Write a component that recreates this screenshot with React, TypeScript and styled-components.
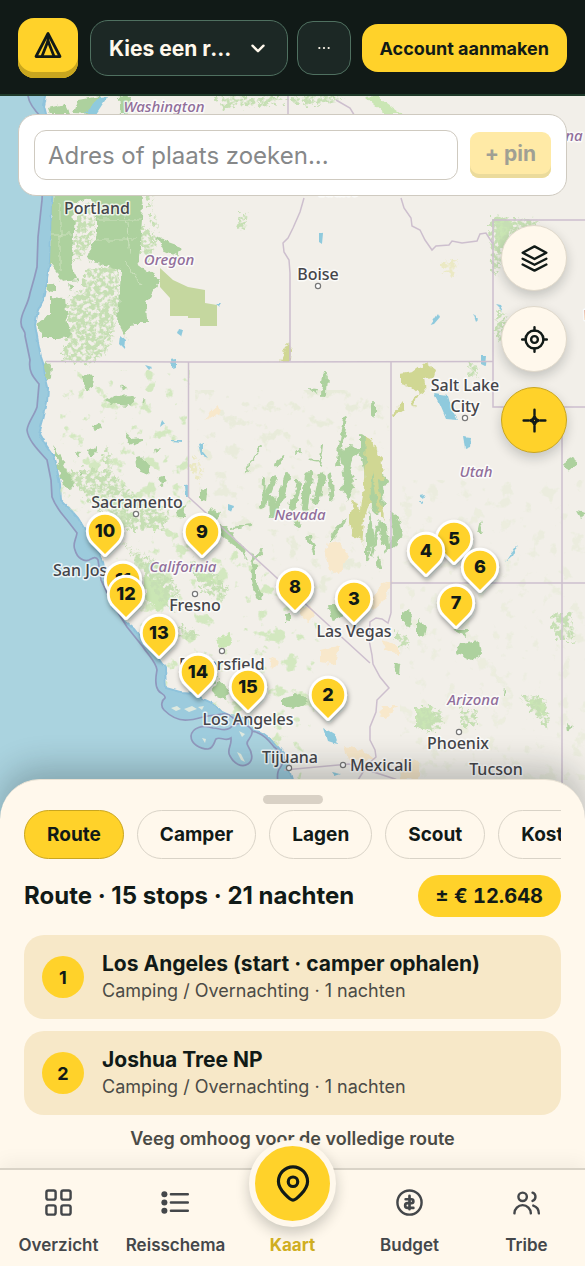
import React from 'react';
import styled, { createGlobalStyle, css } from 'styled-components';

const c = {
  ink: '#111a17',
  panel: '#1c2825',
  line: '#4f7060',
  yellow: '#ffd22a',
  gold: '#c9a61f',
  cream: '#fff8ec',
  sand: '#f7e8c8',
  border: '#d9d3c7',
  muted: '#4b4b46',
};

const GlobalStyle = createGlobalStyle`
  *, *::before, *::after { box-sizing: border-box; }
  body { margin: 0; background: ${c.cream}; color: ${c.ink}; font-family: Inter, "Liberation Sans", sans-serif; }
  button, input, select { font: inherit; color: inherit; margin: 0; }
  button { padding: 0; border: 0; background: none; cursor: pointer; }
`;

const Page = styled.div`
  display: flex;
  flex-direction: column;
  min-height: 100vh;
`;

/* ---------- header ---------- */

const Header = styled.header`
  display: flex;
  align-items: center;
  height: 96px;
  padding: 0 18px;
  background: ${c.ink};
  box-shadow: inset 0 -2px 0 #1f3a2a;
`;

const Logo = styled.a`
  display: grid;
  place-items: center;
  flex: none;
  width: 60px;
  height: 60px;
  margin-right: 12px;
  padding-bottom: 6px;
  border-radius: 16px;
  background: ${c.yellow};
  box-shadow: inset 0 -6px 0 ${c.gold};
  color: ${c.ink};
`;

const TripPicker = styled.label`
  position: relative;
  flex: 1;
  min-width: 0;
  margin-right: 9px;
  color: ${c.cream};
  > svg {
    position: absolute;
    right: 19px;
    top: 17px;
    pointer-events: none;
  }
`;

const TripSelect = styled.select`
  display: block;
  width: 100%;
  height: 56px;
  padding: 0 52px 0 18px;
  appearance: none;
  border: 1px solid ${c.line};
  border-radius: 18px;
  background: ${c.panel};
  font-size: 21px;
  font-weight: 700;
  text-overflow: ellipsis;
  white-space: nowrap;
  overflow: hidden;
`;

const MoreButton = styled.button`
  flex: none;
  width: 54px;
  height: 54px;
  margin-right: 11px;
  border: 1px solid ${c.line};
  border-radius: 16px;
  background: ${c.panel};
  color: ${c.cream};
  display: grid;
  place-items: center;
`;

const AccountButton = styled.button`
  flex: none;
  height: 48px;
  padding: 0 18px;
  border-radius: 16px;
  background: ${c.yellow};
  font-size: 18px;
  font-weight: 700;
`;

/* ---------- map ---------- */

const MapArea = styled.main`
  position: relative;
  flex: 1;
  min-height: 480px;
  overflow: hidden;
  background: #aad3df;
`;

const MapSvg = styled.svg`
  position: absolute;
  inset: 0;
  width: 100%;
  height: 100%;
  display: block;
`;

const SearchBar = styled.form`
  position: absolute;
  top: 18px;
  left: 18px;
  right: 18px;
  display: flex;
  align-items: center;
  gap: 12px;
  height: 82px;
  padding: 0 15px;
  border: 1px solid #cfcac0;
  border-radius: 18px;
  background: #fff;
`;

const SearchInput = styled.input`
  flex: 1;
  min-width: 0;
  height: 50px;
  padding: 0 13px;
  border: 1px solid #cfcac0;
  border-radius: 12px;
  background: #fff;
  font-size: 24px;
  &::placeholder { color: #868889; opacity: 1; }
`;

const PinButton = styled.button`
  flex: none;
  height: 46px;
  padding: 0 15px 4px;
  border-radius: 9px;
  background: #ffeaa6;
  box-shadow: inset 0 -4px 0 #ebdb9c;
  color: #a0a094;
  font-size: 21px;
  font-weight: 700;
`;

const MapTools = styled.div`
  position: absolute;
  top: 129px;
  right: 18px;
  display: flex;
  flex-direction: column;
  gap: 15px;
`;

const ToolButton = styled.button<{ $active?: boolean }>`
  display: grid;
  place-items: center;
  width: 66px;
  height: 66px;
  border: 1px solid ${p => (p.$active ? c.gold : '#e0d9cb')};
  border-radius: 50%;
  background: ${p => (p.$active ? c.yellow : c.cream)};
  box-shadow: 0 5px 12px rgba(17, 26, 23, 0.2);
`;

/* ---------- sheet ---------- */

const Sheet = styled.section`
  position: relative;
  margin-top: -40px;
  padding: 15px 24px 16px;
  border-top: 1px solid #e9e2d4;
  border-radius: 40px 40px 0 0;
  background: ${c.cream};
  box-shadow: 0 -12px 32px rgba(17, 26, 23, 0.24);
`;

const Handle = styled.div`
  width: 60px;
  height: 9px;
  margin: 0 auto 6px;
  border-radius: 5px;
  background: #d9d1c5;
`;

const Tabs = styled.div`
  display: flex;
  gap: 13px;
  overflow: hidden;
`;

const Tab = styled.button<{ $active?: boolean }>`
  flex: none;
  height: 49px;
  padding: 0 22px;
  border: 1px solid ${p => (p.$active ? c.gold : c.border)};
  border-radius: 25px;
  background: ${p => (p.$active ? c.yellow : 'transparent')};
  font-size: 19px;
  font-weight: 700;
`;

const Summary = styled.div`
  display: flex;
  align-items: center;
  justify-content: space-between;
  margin: 16px 0 18px;
`;

const Title = styled.h1`
  margin: 0;
  font-size: 24px;
  line-height: 32px;
  font-weight: 700;
`;

const Price = styled.span`
  padding: 0 18px;
  border-radius: 21px;
  background: ${c.yellow};
  font-size: 20px;
  line-height: 42px;
  font-weight: 700;
  font-variant-numeric: tabular-nums;
`;

const Stops = styled.ol`
  display: flex;
  flex-direction: column;
  gap: 12px;
  margin: 0;
  padding: 0;
  list-style: none;
`;

const Stop = styled.li`
  display: flex;
  align-items: center;
  gap: 18px;
  height: 84px;
  padding: 0 18px;
  border-radius: 20px;
  background: ${c.sand};
`;

const StopNumber = styled.span`
  display: grid;
  place-items: center;
  flex: none;
  width: 42px;
  height: 42px;
  border-radius: 50%;
  background: ${c.yellow};
  font-size: 18px;
  font-weight: 700;
`;

const StopName = styled.div`
  font-size: 21px;
  line-height: 27px;
  font-weight: 700;
`;

const StopMeta = styled.div`
  color: ${c.muted};
  font-size: 18px;
  line-height: 27px;
`;

const Hint = styled.p`
  margin: 11px 0 0;
  color: ${c.muted};
  font-size: 18px;
  line-height: 26px;
  font-weight: 600;
  text-align: center;
`;

/* ---------- bottom navigation ---------- */

const Nav = styled.nav`
  position: relative;
  display: grid;
  grid-template-columns: repeat(5, 1fr);
  grid-template-rows: minmax(0, 1fr);
  height: 98px;
  padding-bottom: 9px;
  border-top: 2px solid ${c.border};
  background: ${c.cream};
  box-shadow: 0 -6px 18px rgba(17, 26, 23, 0.05);
`;

const NavLink = styled.a<{ $active?: boolean }>`
  display: flex;
  flex-direction: column;
  align-items: center;
  justify-content: flex-end;
  gap: 16px;
  min-height: 0;
  color: ${p => (p.$active ? '#cfae22' : '#44474a')};
  font-size: 17px;
  line-height: 24px;
  font-weight: ${p => (p.$active ? 700 : 600)};
  text-decoration: none;
`;

const Bubble = styled.span`
  display: grid;
  place-items: center;
  flex: none;
  width: 87px;
  height: 87px;
  margin-bottom: -10px;
  border: 6px solid ${c.cream};
  border-radius: 50%;
  background: ${c.yellow};
  box-shadow: 0 6px 14px rgba(17, 26, 23, 0.22);
  color: ${c.ink};
`;

/* ---------- icons ---------- */

function Icon({ size = 29, width = 2, children }: { size?: number; width?: number; children: React.ReactNode }) {
  return (
    <svg width={size} height={size} viewBox="0 0 24 24" fill="none" stroke="currentColor" strokeWidth={width}
      strokeLinecap="round" strokeLinejoin="round" aria-hidden="true">
      {children}
    </svg>
  );
}

const TentIcon = () => (
  <Icon size={30} width={2.2}>
    <path d="M12 2.8 2.4 21.2h19.2z" />
    <path d="M12 8.8 7.2 21M12 8.8 16.8 21" />
    <path d="M12 4v5" />
  </Icon>
);
const ChevronIcon = () => <Icon size={22} width={2.6}><path d="m6 9.5 6 6 6-6" /></Icon>;
const DotsIcon = () => (
  <Icon size={14}>
    <g fill="currentColor" stroke="none"><circle cx="4" cy="12" r="1.9" /><circle cx="12" cy="12" r="1.9" /><circle cx="20" cy="12" r="1.9" /></g>
  </Icon>
);
const LayersIcon = () => (
  <Icon><path d="M12 2 2.2 7.2 12 12.4l9.8-5.2zM2.2 12.2l9.8 5 9.8-5M2.2 17l9.8 5 9.8-5" /></Icon>
);
const LocateIcon = () => (
  <Icon><circle cx="12" cy="12" r="7.4" /><circle cx="12" cy="12" r="2.8" /><path d="M12 1.8v2.8M12 19.4v2.8M1.8 12h2.8M19.4 12h2.8" /></Icon>
);
const CompassIcon = () => (
  <Icon><path d="M12 3v4.2M12 16.8V21M3 12h4.2M16.8 12H21" /><path d="m12 8.8 1.1 2.1 2.1 1.1-2.1 1.1-1.1 2.1-1.1-2.1L8.800 12l2.100-1.100z" strokeWidth={2.4} /></Icon>
);
const GridIcon = () => (
  <Icon><rect x="2" y="2" width="7.6" height="7.6" rx="1.6" /><rect x="14.4" y="2" width="7.6" height="7.6" rx="1.6" /><rect x="2" y="14.4" width="7.6" height="7.6" rx="1.6" /><rect x="14.4" y="14.4" width="7.6" height="7.6" rx="1.6" /></Icon>
);
const ListIcon = () => (
  <Icon>
    <path d="M8.2 5.2h14M8.2 12h14M8.2 18.8h14" />
    <g fill="currentColor" stroke="none"><circle cx="2.8" cy="5.2" r="2.5" /><circle cx="2.8" cy="12" r="2.5" /><circle cx="2.8" cy="18.8" r="2.5" /></g>
  </Icon>
);
const PinIcon = () => (
  <Icon size={38}><path d="M12 22.2c-1.4 0-9.2-6.2-9.2-11.8a9.2 9.2 0 0 1 18.4 0c0 5.6-7.8 11.8-9.2 11.8z" /><circle cx="12" cy="10.6" r="3" /></Icon>
);
const CoinIcon = () => (
  <Icon><circle cx="12" cy="12" r="10" /><path d="M12 6.4v11.2M8.8 9.3h4.800a1.600 1.600 0 0 1 0 3.200h-3.200a2 2 0 0 0 0 4h4.800" strokeWidth={2.2} /></Icon>
);
const PeopleIcon = () => (
  <Icon><circle cx="8.8" cy="7.3" r="3.5" /><path d="M2 21a6.800 6.800 0 0 1 13.600 0M17 3.900a3.600 3.600 0 0 1 0 6.800M17.600 14.500a6.800 6.800 0 0 1 4.600 6.500" /></Icon>
);

/* ---------- map data (canvas units) ---------- */

const land = 'M46 96 44 106 48 122 50 150 53 190 52 200 51 235 50 262 46 283 43 300 38 310 35 325 38 342 41 357 44 366 45 376 48 388 47 402 43 420 39 434 46 446 53 456 57 470 60 484 61 500 70 509 78 518 84 528 92 540 97 552 104 562 107 580 110 603 117 612 124 621 134 629 141 638 150 648 158 658 165 668 166 688 180 692 195 693 205 700 214 704 222 712 231 716 247 719 254 729 265 735 273 741 283 753 288 766 292 780 296 830H600V90H47z';

const waters = 'M28 96C29 104 36 112 42 118Q45 140 44 160L42 200 38 237 37 267C34 280 32 286 30 293 28 306 20 314 21 323 21 330 26 330 25 336L30 360C28 372 34 378 39 384L37 407C34 416 28 422 27 430 28 440 38 450 47 460L51 480 52 497C56 508 62 514 67 520L77 533C76 540 72 544 75 550 77 558 84 562 89 560 93 558 96 556 98 560L101 580 112 603 127 627 143 647C148 655 156 662 157 670 156 676 154 684 158 690 160 694 166 694 165 698 162 700 160 706 164 710 170 716 178 721 188 720 196 720 200 717 208 716L222 714C230 712 238 722 247 735 251 730 254 731 258 733 266 736 270 742 274 747 282 752 286 760 280 768 274 774 280 790 284 830';

const darkGreen = [
  '53,186 140,186 143,206 141,233 137,263 160,280 147,303 148,322 135,322 124,334 129,345 118,322 121,270 87,260 97,233 97,205 84,198 74,204 72,262 78,280 62,282 56,272 48,262 51,230',
  '50,297 65,298 67,323 71,335 60,338 43,338 37,323 50,315',
  '157,238 182,247 178,257 163,250', '48,108 65,104 70,114 50,114', '78,100 100,96 92,114 74,113', '118,97 130,96 128,114 120,114',
  '48,283 54,284 54,293 49,292', '69,284 75,286 71,291',
  '45,360 51,365 50,380 46,376', '84,375 94,376 93,387 87,390 84,384', '104,400 114,396 132,395 135,402 128,406 112,404', '120,385 126,388 122,392',
  '143,398 147,400 144,403', '93,426 100,422 102,427 95,431', '126,432 131,438 143,437 142,441 132,446 127,442', '89,450 96,446 95,456 90,456', '75,453 81,454 79,458',
  '135,458 142,457 149,466 148,476 141,473 136,465', '155,448 159,450 156,453', '53,446 60,455 67,469 74,484 71,491 62,484 59,468', '80,470 85,473 82,477',
  '157,478 165,475 168,484 160,486', '201,487 207,490 206,503 201,502', '176,512 186,505 184,517 177,517', '209,508 220,512 215,524 226,526 234,536 244,548 248,560 241,550 226,540 213,528 206,520',
  '251,552 256,565 256,582 263,600 258,600 252,582', '286,615 290,612 290,623 286,622', '218,680 230,690 225,700 213,694', '283,697 300,694 309,702 297,708 283,706',
  '328,606 337,606 344,616 333,620', '339,452 351,443 362,452 352,458 350,470 356,480 348,500 342,489 344,478', '347,516 340,530 329,543 334,530',
  '360,434 366,436 372,450 378,470 386,475 389,485 382,486 384,505 378,515 368,500 364,470 360,452', '378,520 388,528 390,545 387,552 380,540', '391,510 398,522 402,536 395,545 387,552 393,535',
  '370,510 374,540 366,565 366,540', '378,555 383,568 375,566', '323,384 328,375 327,392', '310,388 317,389 316,393',
  '460,644 480,641 482,654 472,661 456,653', '454,630 468,630 465,636', '403,610 411,612 409,630 403,622', '418,620 426,626 424,638 418,636', '396,662 400,664 399,677 395,674',
  '480,520 483,533 477,533', '504,688 506,694 503,694', '566,722 573,727 567,731', '576,511 586,513 580,518', '564,463 574,456 577,464 568,471',
  '200,672 214,674 216,684 204,682',
];

const streaks: number[][] = [
  [262, 446, 250, 462, 2], [250, 462, 248, 472, 2], [274, 478, 264, 504, 6], [288, 475, 278, 506, 6], [299, 484, 293, 506, 6], [309, 476, 305, 508, 8],
  [322, 476, 316, 500, 7], [330, 476, 332, 498, 5], [323, 445, 320, 466, 2], [282, 457, 278, 464, 4], [346, 418, 342, 440, 4], [341, 442, 337, 466, 4], [353, 450, 349, 462, 4], [373, 404, 373, 416, 4],
  [264, 478, 263, 506, 4], [309, 537, 314, 552, 4], [262, 552, 252, 560, 4], [232, 528, 250, 525, 2], [325, 375, 323, 394, 4], [300, 450, 296, 454, 2],
  [272, 500, 273, 514, 8], [296, 520, 300, 526, 4], [378, 525, 372, 555, 3], [396, 518, 401, 534, 5], [311, 460, 318, 461, 3],
];

const lightGreen = [
  '88,270 120,265 119,310 111,345 92,365 62,359 70,330 68,300 80,290', '78,205 96,200 96,235 84,255 74,262', '142,224 158,238 150,262 140,250',
  '105,445 112,455 112,475 106,470', '125,545 165,565 180,590 175,610 158,600 150,580', '180,625 200,634 196,640 182,636',
  '60,470 110,470 140,500 170,510 165,530 130,530 110,520', '190,560 215,570 230,590 220,602 200,588',
  '416,708 440,708 445,725 430,732 416,728', '460,708 478,712 478,726 464,726', '520,695 545,698 550,720 546,728 535,715', '553,615 572,612 575,640 560,640 552,628',
  '470,362 478,365 478,378 468,376', '394,630 410,638 408,650 400,645', '500,310 508,320 500,345 496,330', '215,96 300,98 270,104 225,108',
  '292,96 345,98 320,104 292,104', '155,185 142,185 160,230 150,225', '240,214 248,212 246,228 238,230', '491,216 540,220 520,240 504,250 498,276 492,270',
];

const softGreen = [
  '143,575 160,582 172,595 160,612 146,600', '218,637 230,634 231,645 220,648', '150,525 158,526 156,532', '365,97 378,96 388,104 402,114 384,114', '195,570 212,576 216,584 200,580',
  '416,708 430,708 438,722 424,730 416,726', '494,217 512,222 508,240 498,252', '530,700 542,700 548,718 538,712',
];

const olive = [
  '160,268 173,280 188,287 205,290 205,303 217,305 217,326 200,326 200,318 188,318 188,316 170,316 170,298 160,287',
];
const yellowish = [
  '288,342 292,350 291,361 280,361', '401,374 412,372 426,362 436,370 434,377 424,380 426,392 420,394 412,387 401,384', '392,415 404,402 404,410 393,417', '412,398 418,394 414,408',
  '366,437 372,440 376,462 372,480 370,500 364,520 362,548 360,565 363,540 352,535 348,520 354,500 360,510 364,480',
  '374,446 381,460 385,478 378,482 382,508 385,520 378,512 374,480',
];
const faintYellow = ['196,455 204,470 200,482 190,470', '443,262 458,260 455,276 442,272'];
const desert = [
  '329,543 338,541 348,555 340,575 330,570 326,555', '380,585 392,580 385,600 374,610 368,604', '303,606 316,610 310,622 300,616', '320,650 340,645 336,665 320,662',
  '382,640 398,645 398,655 384,650', '210,412 218,405 221,412 206,420', '382,706 396,706 388,718 380,715', '345,746 366,752 375,760 350,762', '400,760 420,762 418,780 400,778',
  '270,658 280,662 272,670',
];
const lakes = [
  '434,394 448,396 452,410 458,420 446,419 440,405', '171,359 177,358 177,368 172,369', '198,444 203,442 203,452 208,458 201,455', '120,335 126,340 125,350 119,344', '184,485 189,484 189,498 185,498',
  '324,728 334,734 337,744 328,741', '481,356 486,356 485,366 481,364', '463,437 471,438 470,447 465,449', '430,325 438,313 440,317 434,324', '319,232 323,233 322,244 319,242',
  '179,329 183,330 181,337 177,334', '216,304 222,304 220,307', '473,313 478,320 476,322', '228,504 234,506 232,512 228,510', '495,304 500,305 503,312', '85,114 100,97 108,96 96,114',
  '145,365 152,367 149,370', '172,440 182,440 182,442 172,441', '162,420 165,424 160,428', '420,496 426,495 424,499', '418,502 424,502 422,504', '505,562 514,548 518,544 512,556', '331,772 340,774 334,776',
];

const borders = [
  'M46 361.5 190 362 493 361.5', 'M188.5 362V497L370 663', 'M290 361V273L289 260 284 252 283 243 288 238 293 228 300 212 304 198', 'M391 362V613', 'M391 583H590',
  'M585 220H493V407H590', 'M562 407V830', 'M401 198 404 208 411 218 412 226 420 230 425 240 432 250 436 246 449 245 452 241 462 243 477 241 480 234 486 233 493 244',
  'M391 613 388 623 382 619 376 618 370 622 369 640 372 655 373 664 380 677 389 688 377 700 376 712 370 727 370 740 375 750 376 757 368 764 358 780',
  'M284 770 349 764 395 779 440 800', 'M288 96V116', 'M336 100 350 108 356 118',
];

const islands = [
  'M213 728C203 724 192 728 191 736 191 744 200 749 208 749 214 748 214 742 216 739 220 736 226 742 231 738 232 746 226 750 230 756 234 764 242 768 248 764 254 760 252 752 248 746 244 740 254 738 252 730 246 722 236 722 230 728 224 732 220 728 213 728z',
];

type Label = [string, number, number, ('middle' | 'start')?];
const cities: Label[] = [
  ['Portland', 97, 214], ['Boise', 318, 280], ['Salt Lake', 465, 391], ['City', 465, 412], ['Sacramento', 137, 508], ['San Jose', 53, 576, 'start'],
  ['Fresno', 195, 611], ['Bakersfield', 179, 670, 'start'], ['Los Angeles', 248, 725], ['Tijuana', 290, 763], ['Mexicali', 381, 771], ['Tucson', 496, 775],
  ['Phoenix', 458, 749], ['Las Vegas', 354, 637],
];
const states: Label[] = [
  ['Washington', 164, 112], ['Oregon', 169, 265], ['Utah', 476, 477], ['California', 183, 572], ['Arizona', 473, 705], ['Nevada', 300, 520],
  ['Idaho', 340, 196], ['Montana', 552, 141], ['Wyoming', 583, 320, 'start'],
];
const dots = [[318, 286], [465, 418], [136, 514], [195, 594], [222, 651], [289, 768], [343, 765], [459, 732]];

const pins = [
  [5, 454, 539], [4, 426, 551], [9, 202, 532], [10, 105, 531], [6, 480, 567], [11, 123, 580], [8, 295, 587], [12, 126, 594],
  [3, 354, 599], [7, 456, 603], [13, 159, 633], [14, 198, 672], [15, 248, 687], [2, 328, 695],
];

function Shapes({ list, fill, filter }: { list: string[]; fill: string; filter?: string }) {
  return <g fill={fill} filter={filter}>{list.map(p => <polygon key={p} points={p} />)}</g>;
}

const MapLabel = styled.text<{ $state?: boolean }>`
  font-family: "Noto Sans", "Open Sans", sans-serif;
  font-size: 16px;
  font-weight: 500;
  fill: #45454a;
  stroke: rgba(255, 255, 255, 0.75);
  stroke-width: 3px;
  stroke-linejoin: round;
  paint-order: stroke;
  ${p => p.$state && css`
    font-style: italic;
    font-size: 15px;
    fill: #916f9b;
  `}
`;

const PinText = styled.text`
  font-family: Inter, sans-serif;
  font-size: 18px;
  font-weight: 800;
  text-anchor: middle;
  fill: ${c.ink};
`;

function RouteMap() {
  return (
    <MapSvg viewBox="0 96 585 724" preserveAspectRatio="xMidYMin slice" aria-label="Kaart met route">
      <defs>
        <filter id="rough" x="0" y="90" width="600" height="740" filterUnits="userSpaceOnUse">
          <feTurbulence type="fractalNoise" baseFrequency="0.14" numOctaves="2" seed="4" result="n" />
          <feDisplacementMap in="SourceGraphic" in2="n" scale="8" xChannelSelector="R" yChannelSelector="G" result="d" />
          <feGaussianBlur in="d" stdDeviation="0.6" />
        </filter>
        <filter id="coast" x="-20" y="90" width="640" height="750" filterUnits="userSpaceOnUse">
          <feTurbulence type="fractalNoise" baseFrequency="0.1" numOctaves="2" seed="9" result="n" />
          <feDisplacementMap in="SourceGraphic" in2="n" scale="4" xChannelSelector="R" yChannelSelector="G" result="d" />
          <feGaussianBlur in="d" stdDeviation="0.6" />
        </filter>
        <filter id="speckle" x="0" y="90" width="600" height="740" filterUnits="userSpaceOnUse">
          <feTurbulence type="fractalNoise" baseFrequency="0.22" numOctaves="3" seed="11" result="n" />
          <feColorMatrix in="n" type="matrix" values="0 0 0 0 0  0 0 0 0 0  0 0 0 0 0  5 0 0 0 -1.8" result="m" />
          <feDisplacementMap in="SourceGraphic" in2="n" scale="14" xChannelSelector="R" yChannelSelector="G" result="d" />
          <feComposite in="d" in2="m" operator="in" result="s" />
          <feGaussianBlur in="s" stdDeviation="0.6" />
        </filter>
        <filter id="scatter" x="0" y="90" width="600" height="740" filterUnits="userSpaceOnUse">
          <feTurbulence type="fractalNoise" baseFrequency="0.07" numOctaves="4" seed="21" result="n" />
          <feColorMatrix in="n" type="matrix" values="0 0 0 0 0  0 0 0 0 0  0 0 0 0 0  0 10 0 0 -6" result="m" />
          <feComposite in="SourceGraphic" in2="m" operator="in" result="s" />
          <feGaussianBlur in="s" stdDeviation="0.7" />
        </filter>
        <filter id="pinShadow" x="-40%" y="-30%" width="190%" height="180%">
          <feDropShadow dx="1" dy="3" stdDeviation="2.5" floodColor="#111a17" floodOpacity="0.4" />
        </filter>
        <clipPath id="landClip"><path d={land} /></clipPath>
      </defs>

      <rect x="0" y="90" width="600" height="740" fill="#aad3df" />
      <path d={`${waters}H600V90H28z`} fill="#9ccbdd" />
      <path d={land} fill="#f2efe9" stroke="#8fc3dc" strokeWidth="2" filter="url(#coast)" />
      <g clipPath="url(#landClip)">
        <path d="M60 370H190V500L290 590 330 640 300 780 160 690 100 560 60 500z" fill="#d3e8c0" filter="url(#scatter)" />
        <path d="M195 390H390V600L300 590 200 500z" fill="#dbe7c6" filter="url(#scatter)" opacity="0.4" />
        <path d="M400 480H585V780H400z" fill="#dce8c8" filter="url(#scatter)" opacity="0.3" />
        <Shapes list={desert} fill="#f8e8cb" filter="url(#rough)" />
        <Shapes list={faintYellow} fill="#ebe9c4" filter="url(#speckle)" />
        <Shapes list={softGreen} fill="#cae6b4" filter="url(#rough)" />
        <Shapes list={lightGreen} fill="#c6dfb4" filter="url(#speckle)" />
        <Shapes list={darkGreen} fill="#add19e" filter="url(#rough)" />
        <g stroke="#add19e" strokeLinecap="round" filter="url(#rough)">
          {streaks.map(([x1, y1, x2, y2, w]) => <line key={`${x1}-${y1}`} x1={x1} y1={y1} x2={x2} y2={y2} strokeWidth={w} />)}
        </g>
        <g stroke="#dbe8cc" strokeWidth="1" fill="none" filter="url(#rough)" opacity="0.7">
          <path d="M125 205 130 255M98 220H140M90 240H136M125 262 142 285M60 205V270M52 235H72" />
        </g>
        <Shapes list={olive} fill="#c5d79f" />
        <Shapes list={yellowish} fill="#d0d793" filter="url(#rough)" />
      </g>
      <Shapes list={lakes} fill="#8fcadd" filter="url(#coast)" />

      <g fill="none" stroke="#cdbfce" strokeWidth="1.5">
        {borders.map(d => <path key={d} d={d} />)}
      </g>
      <g fill="none" stroke="#8d8fb8" strokeWidth="1.7" opacity="0.85">
        <path d={waters} />
        {islands.map(d => <path key={d} d={d} fill="#9ccbdd" />)}
      </g>
      <g fill="#dfe9df">
        <path d="M171 708l6-2 4 3-5 2zM184 709l8-3 5 3-8 3zM198 707l6-1-2 4zM202 738l4 1-1 4zM237 752l4 2 4 8-4-2zM239 731l6 3-3 3z" />
      </g>

      {dots.map(([x, y]) => <circle key={x} cx={x} cy={y} r="2.6" fill="#fff" stroke="#777" strokeWidth="1.2" />)}
      {states.map(([t, x, y, a]) => <MapLabel key={t} $state x={x} y={y} textAnchor={a ?? 'middle'}>{t}</MapLabel>)}
      {cities.map(([t, x, y, a]) => <MapLabel key={t} x={x} y={y} textAnchor={a ?? 'middle'}>{t}</MapLabel>)}

      {pins.map(([n, x, y]) => (
        <a key={n} href={`#stop-${n}`} aria-label={`Stop ${n}`}>
          <g transform={`translate(${x} ${y})`}>
            <path d="M-12.5 12.5A17.7 17.7 0 1 1 12.5 12.5L1 24q-1 1-2 0z" fill={c.yellow} stroke="#fff" strokeWidth="2.8" strokeLinejoin="round" filter="url(#pinShadow)" />
            <PinText y="6">{n}</PinText>
          </g>
        </a>
      ))}
    </MapSvg>
  );
}

/* ---------- page ---------- */

const tabs = ['Route', 'Camper', 'Lagen', 'Scout', 'Kosten'];
const stops = [
  { n: 1, name: 'Los Angeles (start · camper ophalen)', meta: 'Camping / Overnachting · 1 nachten' },
  { n: 2, name: 'Joshua Tree NP', meta: 'Camping / Overnachting · 1 nachten' },
];

export default function App() {
  return (
    <Page>
      <GlobalStyle />
      <Header>
        <Logo href="#home" aria-label="Home"><TentIcon /></Logo>
        <TripPicker>
          <TripSelect aria-label="Reis" defaultValue="">
            <option value="">Kies een reis of route</option>
          </TripSelect>
          <ChevronIcon />
        </TripPicker>
        <MoreButton type="button" aria-label="Meer"><DotsIcon /></MoreButton>
        <AccountButton type="button">Account aanmaken</AccountButton>
      </Header>

      <MapArea>
        <RouteMap />
        <SearchBar onSubmit={e => e.preventDefault()}>
          <SearchInput type="text" aria-label="Adres of plaats" placeholder="Adres of plaats zoeken..." />
          <PinButton type="submit" disabled>+ pin</PinButton>
        </SearchBar>
        <MapTools>
          <ToolButton type="button" aria-label="Kaartlagen"><LayersIcon /></ToolButton>
          <ToolButton type="button" aria-label="Mijn locatie"><LocateIcon /></ToolButton>
          <ToolButton type="button" aria-label="Centreren" $active><CompassIcon /></ToolButton>
        </MapTools>
      </MapArea>

      <Sheet>
        <Handle />
        <Tabs role="tablist">
          {tabs.map((t, i) => (
            <Tab key={t} type="button" role="tab" aria-selected={i === 0} $active={i === 0}>{t}</Tab>
          ))}
        </Tabs>
        <Summary>
          <Title>Route · 15 stops · 21 nachten</Title>
          <Price>± € 12.648</Price>
        </Summary>
        <Stops>
          {stops.map(s => (
            <Stop key={s.n}>
              <StopNumber>{s.n}</StopNumber>
              <div>
                <StopName>{s.name}</StopName>
                <StopMeta>{s.meta}</StopMeta>
              </div>
            </Stop>
          ))}
        </Stops>
        <Hint>Veeg omhoog voor de volledige route</Hint>
      </Sheet>

      <Nav>
        <NavLink href="#overzicht"><GridIcon />Overzicht</NavLink>
        <NavLink href="#reisschema"><ListIcon />Reisschema</NavLink>
        <NavLink href="#kaart" $active><Bubble><PinIcon /></Bubble>Kaart</NavLink>
        <NavLink href="#budget"><CoinIcon />Budget</NavLink>
        <NavLink href="#tribe"><PeopleIcon />Tribe</NavLink>
      </Nav>
    </Page>
  );
}
